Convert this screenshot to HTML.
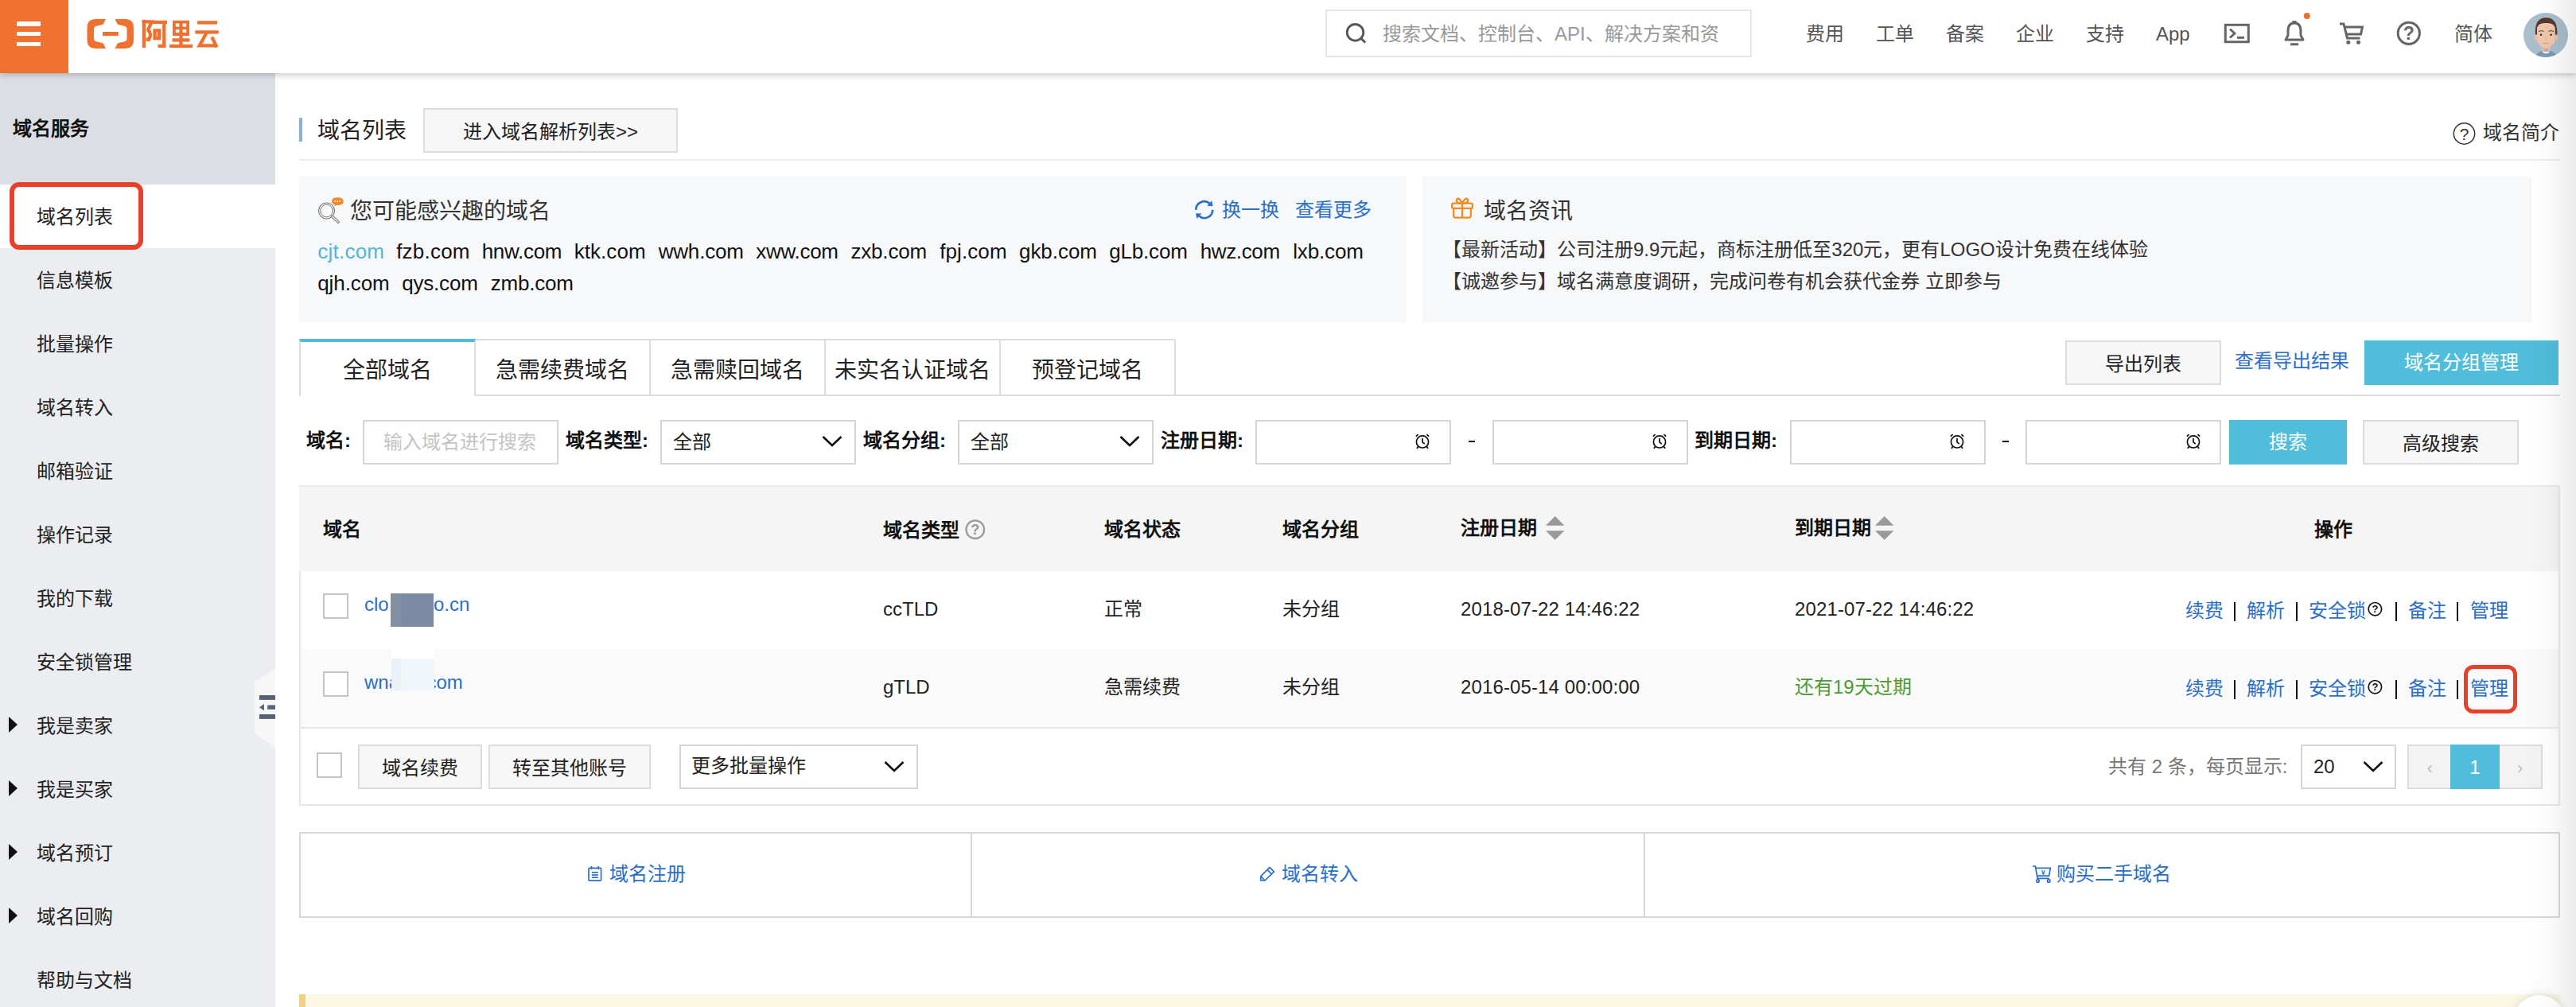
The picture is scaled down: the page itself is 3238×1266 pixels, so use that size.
<!DOCTYPE html>
<html lang="zh-CN">
<head>
<meta charset="utf-8">
<title>域名列表</title>
<style>
*{box-sizing:border-box;margin:0;padding:0}
html,body{width:3238px;height:1266px;overflow:hidden;background:#fff}
body{position:relative;font-family:"Liberation Sans",sans-serif;font-size:24px;color:#222;}
.a{position:absolute}
.t{position:absolute;white-space:nowrap;line-height:40px;height:40px}
.b{font-weight:bold}
.lk{color:#2a6fc9}
svg{position:absolute;overflow:visible}
/* header */
#hd{position:absolute;left:0;top:0;width:3238px;height:92px;background:#fff;box-shadow:0 1px 9px rgba(0,0,0,.28);z-index:10}
#ham{position:absolute;left:0;top:0;width:86px;height:92px;background:#f0702f}
#ham i{position:absolute;left:21px;width:30px;height:5.4px;background:#fff}
.nav{color:#555}
/* sidebar */
#sb{position:absolute;left:0;top:92px;width:346px;height:1174px;background:#ebedf1}
#sbh{position:absolute;left:0;top:0;width:346px;height:140px;background:#dbdee3}
.si{position:absolute;left:45.5px;height:40px;line-height:40px;white-space:nowrap;color:#222}
.tri{position:absolute;left:11px;width:0;height:0;border-left:11px solid #111;border-top:10.5px solid transparent;border-bottom:10.5px solid transparent}
/* generic boxes */
.inp{position:absolute;top:528px;height:56px;border:2px solid #d4d5d8;background:#fff}
.btn{position:absolute;border:2px solid #dcdcdc;background:#f7f7f7;text-align:center;color:#222;white-space:nowrap}
.teal{position:absolute;background:#50bdda;color:#fff;text-align:center;white-space:nowrap}
.cb{position:absolute;width:32px;height:32px;border:2px solid #c4c4c4;background:#fff}
.tb{text-align:center;font-size:28px;color:#222}
#doms span{position:absolute;white-space:nowrap}
.th{color:#111}
.sep{position:absolute;width:2px;height:24px;background:#111}
</style>
</head>
<body>
<div id="hd">
  <div id="ham"><i style="top:27.2px"></i><i style="top:40.1px"></i><i style="top:52.9px"></i></div>
  <!-- logo -->
  <svg style="left:0;top:0" width="300" height="92" viewBox="0 0 300 92">
    <g fill="#f0702f">
      <path d="M133 24 L120.5 24 Q109.5 24 109.5 35 L109.5 50 Q109.5 61 120.5 61 L133 61 L129.6 54.2 L121 52.2 Q118 51.4 118 48.4 L118 36.6 Q118 33.6 121 32.8 L129.6 30.8 Z"/>
      <path d="M144.5 24 L157 24 Q168 24 168 35 L168 50 Q168 61 157 61 L144.5 61 L147.9 54.2 L156.500 52.2 Q159.5 51.4 159.5 48.4 L159.5 36.6 Q159.5 33.600 156.500 32.8 L147.9 30.8 Z"/>
      <rect x="129" y="40" width="19.800" height="5"/>
    </g>
    <g fill="none" stroke="#f0702f" stroke-width="4.300" stroke-linejoin="miter" stroke-linecap="butt">
      <!-- 阿 -->
      <path d="M180.900 24.800 V60.200"/>
      <path d="M178.600 27.300 H190.600 L186.200 37.500 Q191.400 43 186.800 50 L183.500 49.400"/>
      <path d="M191.800 27.900 H210"/>
      <path d="M206.300 27.900 V57.800 H198.500"/>
      <path d="M194.600 38.400 H200.200 V48 H194.600 Z"/>
      <!-- 里 -->
      <path d="M218.900 27.700 H236.100 V43 H218.900 Z" stroke-width="3.800"/>
      <path d="M218.900 35.300 H236.100" stroke-width="3.400"/>
      <path d="M227.500 28 V58"/>
      <path d="M216.600 50.400 H238.400"/>
      <path d="M213 57.900 H242"/>
      <!-- 云 -->
      <path d="M248.100 28.400 H273"/>
      <path d="M245.300 40.400 H274.800"/>
      <path d="M259.500 41.500 L250.800 57.300 H271.800"/>
      <path d="M266.300 46.500 L272.600 59.500"/>
    </g>
  </svg>
  <!-- search -->
  <div class="a" style="left:1666px;top:12px;width:536px;height:60px;border:2px solid #e6e6e6;background:#fff"></div>
  <svg style="left:1690px;top:28px" width="30" height="30" viewBox="0 0 30 30"><circle cx="13.500" cy="12.800" r="10.300" fill="none" stroke="#555" stroke-width="2.800"/><path d="M20.800 20.400 L26.300 25.500" stroke="#555" stroke-width="2.800" fill="none"/></svg>
  <div class="t" style="left:1738px;top:22.5px;color:#999">搜索文档、控制台、API、解决方案和资</div>
  <!-- nav -->
  <div class="t nav" style="left:2270px;top:22.5px">费用</div>
  <div class="t nav" style="left:2358px;top:22.5px">工单</div>
  <div class="t nav" style="left:2446px;top:22.5px">备案</div>
  <div class="t nav" style="left:2534px;top:22.5px">企业</div>
  <div class="t nav" style="left:2622px;top:22.5px">支持</div>
  <div class="t nav" style="left:2710px;top:22.5px">App</div>
  <!-- terminal -->
  <svg style="left:2796px;top:30px" width="32" height="24" viewBox="0 0 32 24"><rect x="1.300" y="1.300" width="29" height="21.400" fill="none" stroke="#666" stroke-width="3"/><path d="M7 6.500 L13 12 L7 17.500" fill="none" stroke="#666" stroke-width="3"/><path d="M16 17.300 H25" stroke="#666" stroke-width="3"/></svg>
  <!-- bell -->
  <svg style="left:2870px;top:14px" width="36" height="46" viewBox="0 0 36 46"><path d="M11.300 13.500 H16.700" stroke="#666" stroke-width="2.800"/><path d="M3 36 L6 30.500 V25 Q6 15 14 15 Q22 15 22 25 V30.500 L25 36 Z" fill="none" stroke="#666" stroke-width="3" stroke-linejoin="round"/><path d="M9 41.700 H19" stroke="#666" stroke-width="3"/><circle cx="29.800" cy="5.900" r="4" fill="#f0702f"/></svg>
  <!-- cart -->
  <svg style="left:2940px;top:28px" width="34" height="30" viewBox="0 0 34 30"><path d="M1 2 H6 L10.500 20 H26.500" fill="none" stroke="#666" stroke-width="3"/><path d="M7 6 H29.500 L27.500 15 H9.500" fill="none" stroke="#666" stroke-width="3"/><circle cx="11.800" cy="25.300" r="2.500" fill="#666"/><circle cx="24.500" cy="25.300" r="2.500" fill="#666"/></svg>
  <!-- help -->
  <svg style="left:3012px;top:26px" width="32" height="32" viewBox="0 0 32 32"><circle cx="15.800" cy="15.800" r="13.600" fill="none" stroke="#666" stroke-width="3"/><text x="15.800" y="24" text-anchor="middle" font-family="Liberation Sans, sans-serif" font-weight="bold" font-size="23" fill="#666">?</text></svg>
  <div class="t nav" style="left:3085px;top:22.5px">简体</div>
  <!-- avatar -->
  <svg style="left:3172px;top:16px" width="56" height="56" viewBox="0 0 56 56">
    <defs><clipPath id="avc"><circle cx="28" cy="28" r="28"/></clipPath></defs>
    <g clip-path="url(#avc)">
      <rect width="56" height="56" fill="#a9bfcc"/>
      <path d="M15 56 Q17 48.500 24 48 H33 Q40 48.500 42 56 Z" fill="#7a9bb5"/>
      <path d="M24.300 44 H32.300 V50 Q28.300 52.500 24.300 50 Z" fill="#fff"/>
      <path d="M24.800 40 H31.800 V48.500 Q28.300 50.500 24.800 48.500 Z" fill="#dba58e"/>
      <ellipse cx="15.600" cy="31" rx="2.200" ry="3.500" fill="#e9bfa5"/><ellipse cx="41.200" cy="31" rx="2.200" ry="3.500" fill="#e9bfa5"/>
      <path d="M15 27.500 Q13.500 6.200 28.400 6.200 Q43.300 6.200 42.300 27.500 Z" fill="#5a3630"/>
      <path d="M17 21 Q17 12.500 28.400 13 Q39.800 12.500 39.800 21 V32 Q39.800 42 28.400 45.500 Q17 42 17 32 Z" fill="#f0c8ac"/>
      <circle cx="22" cy="27.800" r="1.300" fill="#3a2a26"/><circle cx="34.600" cy="27.800" r="1.300" fill="#3a2a26"/>
      <path d="M19 23.500 Q22 21.800 25.500 23.300" stroke="#5a3630" stroke-width="1" fill="none"/><path d="M31.500 23.300 Q35 21.800 38 23.500" stroke="#5a3630" stroke-width="1" fill="none"/>
      <path d="M24.500 38.600 H32" stroke="#dba58e" stroke-width="1.400"/>
      <path d="M28.500 29 L27.800 34 H29.300" stroke="#e2b398" stroke-width="0.900" fill="none"/>
    </g>
  </svg>
</div>

<div id="sb">
<div id="sbh"></div>
<div class="t b" style="left:16px;top:50px;color:#111">域名服务</div>
<div class="a" style="left:0;top:140px;width:346px;height:80px;background:#fff"></div>
<div class="si" style="top:160.5px">域名列表</div>
<div class="si" style="top:240.5px">信息模板</div>
<div class="si" style="top:320.5px">批量操作</div>
<div class="si" style="top:400.5px">域名转入</div>
<div class="si" style="top:480.5px">邮箱验证</div>
<div class="si" style="top:560.5px">操作记录</div>
<div class="si" style="top:640.5px">我的下载</div>
<div class="si" style="top:720.5px">安全锁管理</div>
<div class="si" style="top:800.5px">我是卖家</div>
<div class="tri" style="top:808.5px"></div>
<div class="si" style="top:880.5px">我是买家</div>
<div class="tri" style="top:888.5px"></div>
<div class="si" style="top:960.5px">域名预订</div>
<div class="tri" style="top:968.5px"></div>
<div class="si" style="top:1040.5px">域名回购</div>
<div class="tri" style="top:1048.5px"></div>
<div class="si" style="top:1120.5px">帮助与文档</div>
<div class="a" style="left:12px;top:136.700px;width:168px;height:85px;border:6px solid #e9402a;border-radius:12px"></div>
<svg style="left:320px;top:748px" width="26" height="100" viewBox="0 0 26 100"><path d="M26 0 L0 17.500 V82 L26 99.500 Z" fill="#f7f7f8"/><g fill="#566378"><rect x="6" y="34" width="20" height="5.900"/><rect x="16.200" y="46.500" width="9.800" height="5.400"/><path d="M6 49.200 L11.900 45 V53.400 Z"/><rect x="6" y="58" width="20" height="5.900"/></g></svg>
</div>
<!-- title bar -->
<div class="a" style="left:376px;top:148px;width:4px;height:30px;background:#86b3dc"></div>
<div class="t" style="left:399px;top:145px;font-size:28px;color:#222">域名列表</div>
<div class="btn" style="left:532px;top:136px;width:320px;height:56px;line-height:55px">进入域名解析列表&gt;&gt;</div>
<svg style="left:3083px;top:154px" width="30" height="30" viewBox="0 0 30 30"><circle cx="14.500" cy="14" r="13.200" fill="none" stroke="#333" stroke-width="1.500"/><text x="14.500" y="21.500" text-anchor="middle" font-family="Liberation Sans, sans-serif" font-size="21" fill="#333">?</text></svg>
<div class="t" style="left:3121px;top:147px;color:#333">域名简介</div>
<div class="a" style="left:376px;top:200px;width:2842px;height:2px;background:#ececec"></div>
<!-- panel left -->
<div class="a" style="left:376px;top:222px;width:1392px;height:184px;background:#f7f8fa"></div>
<svg style="left:399px;top:247px" width="34" height="34" viewBox="0 0 34 34">
  <circle cx="11.500" cy="18" r="10" fill="none" stroke="#777" stroke-width="1.100"/><circle cx="11.500" cy="18" r="7.800" fill="none" stroke="#777" stroke-width="1"/>
  <path d="M18.500 25 L26.300 32.200" stroke="#777" stroke-width="3.200" stroke-linecap="round"/><path d="M18.500 25 L26.300 32.200" stroke="#f7f8fa" stroke-width="1.200" stroke-linecap="round"/>
  <path d="M18 6.200 Q18 1.200 25.300 1.200 Q32.700 1.200 32.700 6.200 Q32.700 11 25.300 11 L23.500 11 L21.500 12.600 L21.800 10.600 Q18 9.500 18 6.200 Z" fill="#f08a2b"/>
  <circle cx="22.300" cy="6.100" r="0.900" fill="#fff"/><circle cx="25.300" cy="6.100" r="0.900" fill="#fff"/><circle cx="28.300" cy="6.100" r="0.900" fill="#fff"/>
</svg>
<div class="t" style="left:440px;top:246px;font-size:28px;color:#333">您可能感兴趣的域名</div>
<svg style="left:1500px;top:250px" width="28" height="28" viewBox="0 0 28 28"><g fill="none" stroke="#2a6fc9" stroke-width="2.600"><path d="M3.300 13.700 A10.400 10.400 0 0 1 20.500 5.800"/><path d="M24.300 13.700 A10.400 10.400 0 0 1 7.100 21.600"/></g><path d="M17.200 8.800 L24.600 9.200 L23.200 2.300 Z" fill="#2a6fc9"/><path d="M10.400 18.600 L3 18.200 L4.400 25.100 Z" fill="#2a6fc9"/></svg>
<div class="t lk" style="left:1536px;top:244px">换一换</div>
<div class="t lk" style="left:1628px;top:244px">查看更多</div>
<div class="a" id="doms" style="left:400px;top:296px;width:1340px;font-size:26px;line-height:40px;color:#111;word-spacing:0"><span style="left:-0.8px;top:0px;letter-spacing:0.24px;color:#4fb8d8">cjt.com</span><span style="left:98.2px;top:0px;letter-spacing:0.21px">fzb.com</span><span style="left:205.7px;top:0px;letter-spacing:-0.30px">hnw.com</span><span style="left:321.7px;top:0px;letter-spacing:0.06px">ktk.com</span><span style="left:427.7px;top:0px;letter-spacing:-0.19px">wwh.com</span><span style="left:550.2px;top:0px;letter-spacing:-0.28px">xww.com</span><span style="left:669.4px;top:0px;letter-spacing:-0.16px">zxb.com</span><span style="left:781.2px;top:0px;letter-spacing:0.10px">fpj.com</span><span style="left:881.0px;top:0px;letter-spacing:-0.05px">gkb.com</span><span style="left:994.2px;top:0px;letter-spacing:-0.18px">gLb.com</span><span style="left:1108.7px;top:0px;letter-spacing:-0.37px">hwz.com</span><span style="left:1225.2px;top:0px;letter-spacing:-0.15px">lxb.com</span><span style="left:-0.8px;top:40px;letter-spacing:-0.08px">qjh.com</span><span style="left:105.2px;top:40px;letter-spacing:-0.19px">qys.com</span><span style="left:216.7px;top:40px;letter-spacing:-0.21px">zmb.com</span></div>
<!-- panel right -->
<div class="a" style="left:1788px;top:222px;width:1394px;height:184px;background:#f7f8fa"></div>
<svg style="left:1823px;top:246px" width="30" height="30" viewBox="0 0 30 30"><g fill="none" stroke="#f08a24" stroke-width="2.200" stroke-linejoin="round"><rect x="2.100" y="9.600" width="25.800" height="6.300" rx="1.500"/><path d="M4.200 15.900 V25.200 Q4.200 27.600 6.600 27.600 H23.400 Q25.800 27.600 25.800 25.200 V15.900"/><path d="M15 9.600 V27.600"/><path d="M15 9.600 Q6.500 9.600 8 4.800 Q10.500 0.800 15 9.600 Q19.500 0.800 22 4.800 Q23.500 9.600 15 9.600"/></g></svg>
<div class="t" style="left:1864.5px;top:246px;font-size:28px;color:#333">域名资讯</div>
<div class="t" style="left:1813px;top:294px;color:#333">【最新活动】公司注册9.9元起，商标注册低至320元，更有LOGO设计免费在线体验</div>
<div class="t" style="left:1813px;top:334px;color:#333">【诚邀参与】域名满意度调研，完成问卷有机会获代金券 立即参与</div>
<!-- tabs -->
<div class="a" style="left:376px;top:496px;width:2842px;height:2px;background:#ddd"></div>
<div class="a" style="left:596.500px;top:426px;width:881.500px;height:72px;border:2px solid #ddd;border-left:none"></div>
<div class="a" style="left:816px;top:428px;width:2px;height:68px;background:#ddd"></div>
<div class="a" style="left:1036px;top:428px;width:2px;height:68px;background:#ddd"></div>
<div class="a" style="left:1255.500px;top:428px;width:2px;height:68px;background:#ddd"></div>
<div class="a" style="left:376px;top:426px;width:222px;height:72px;background:#fff;border:2px solid #ddd;border-bottom:none;border-top:4px solid #4fbcd8"></div>
<div class="t tb" style="left:376px;width:222px;top:446px">全部域名</div>
<div class="t tb" style="left:597px;width:220px;top:446px">急需续费域名</div>
<div class="t tb" style="left:817px;width:220px;top:446px">急需赎回域名</div>
<div class="t tb" style="left:1037px;width:220px;top:446px">未实名认证域名</div>
<div class="t tb" style="left:1257px;width:220px;top:446px">预登记域名</div>
<div class="btn" style="left:2596px;top:428px;width:196px;height:56px;line-height:55px">导出列表</div>
<div class="t lk" style="left:2809px;top:434px">查看导出结果</div>
<div class="teal" style="left:2972px;top:428px;width:244px;height:56px;line-height:56px">域名分组管理</div>

<!-- filter row -->
<div class="t b" style="left:385px;top:534px;color:#111">域名:</div>
<div class="inp" style="left:456px;width:246px"></div>
<div class="t" style="left:482px;top:536px;color:#c4c4c4">输入域名进行搜索</div>
<div class="t b" style="left:711px;top:534px;color:#111">域名类型:</div>
<div class="inp" style="left:830px;width:246px"></div>
<div class="t" style="left:846px;top:536px">全部</div>
<svg class="chev" style="left:1033px;top:547px" width="26" height="16" viewBox="0 0 26 16"><path d="M1.500 2 L13 13 L24.500 2" fill="none" stroke="#111" stroke-width="2.600"/></svg>
<div class="t b" style="left:1085px;top:534px;color:#111">域名分组:</div>
<div class="inp" style="left:1204px;width:246px"></div>
<div class="t" style="left:1220px;top:536px">全部</div>
<svg class="chev" style="left:1407px;top:547px" width="26" height="16" viewBox="0 0 26 16"><path d="M1.500 2 L13 13 L24.500 2" fill="none" stroke="#111" stroke-width="2.600"/></svg>
<div class="t b" style="left:1459px;top:534px;color:#111">注册日期:</div>
<div class="inp" style="left:1578px;width:246px"></div>
<div class="inp" style="left:1876px;width:246px"></div>
<div class="a" style="left:1845.500px;top:553.800px;width:8.500px;height:2.600px;background:#111"></div>
<div class="t b" style="left:2130px;top:534px;color:#111">到期日期:</div>
<div class="inp" style="left:2250px;width:246px"></div>
<div class="inp" style="left:2546px;width:246px"></div>
<div class="a" style="left:2516.500px;top:553.800px;width:8.500px;height:2.600px;background:#111"></div>
<svg width="0" height="0"><defs><g id="clk" fill="none" stroke="#111" stroke-width="1.700"><circle cx="10" cy="10.400" r="7.600"/><path d="M10 6 V10.800 L12.800 13.200"/><path d="M1.800 3.600 L4.600 1.200"/><path d="M18.200 3.600 L15.400 1.200"/><path d="M4.600 16.600 L2.800 18.800"/><path d="M15.400 16.600 L17.200 18.800"/></g></defs></svg>
<svg style="left:1778px;top:545px" width="20" height="20"><use href="#clk"/></svg>
<svg style="left:2076px;top:545px" width="20" height="20"><use href="#clk"/></svg>
<svg style="left:2450px;top:545px" width="20" height="20"><use href="#clk"/></svg>
<svg style="left:2747px;top:545px" width="20" height="20"><use href="#clk"/></svg>
<div class="teal" style="left:2802px;top:528px;width:148px;height:56px;line-height:56px">搜索</div>
<div class="btn" style="left:2970px;top:528px;width:196px;height:56px;line-height:55px">高级搜索</div>
<!-- table -->
<div class="a" style="left:376px;top:610px;width:2842px;height:108px;background:#f5f5f5;border-top:2px solid #ebebeb"></div>
<div class="a" style="left:376px;top:816px;width:2842px;height:98px;background:#fafafa"></div>
<div class="a" style="left:376px;top:914px;width:2842px;height:2px;background:#e8e8e8"></div>
<div class="a" style="left:376px;top:1011px;width:2842px;height:2px;background:#e8e8e8"></div>
<div class="a" style="left:376px;top:718px;width:2px;height:295px;background:#e8e8e8"></div>
<div class="a" style="left:3216px;top:610px;width:2px;height:403px;background:#e8e8e8"></div>
<div class="t b th" style="left:406px;top:646px">域名</div>
<div class="t b th" style="left:1110px;top:647px">域名类型</div>
<svg style="left:1212px;top:652px" width="28" height="28" viewBox="0 0 28 28"><circle cx="13.800" cy="13.700" r="11.300" fill="none" stroke="#999" stroke-width="2.300"/><text x="13.800" y="20.300" text-anchor="middle" font-family="Liberation Sans, sans-serif" font-weight="bold" font-size="18" fill="#999">?</text></svg>
<div class="t b th" style="left:1388px;top:646px">域名状态</div>
<div class="t b th" style="left:1612px;top:646px">域名分组</div>
<div class="t b th" style="left:1836px;top:644px">注册日期</div>
<svg style="left:1943px;top:649px" width="24" height="30" viewBox="0 0 24 30"><path d="M11.700 0 L23.400 11.700 H0 Z M0 18.200 H23.400 L11.700 29.700 Z" fill="#999"/></svg>
<div class="t b th" style="left:2256px;top:644px">到期日期</div>
<svg style="left:2356.500px;top:649px" width="24" height="30" viewBox="0 0 24 30"><path d="M11.700 0 L23.400 11.700 H0 Z M0 18.200 H23.400 L11.700 29.700 Z" fill="#999"/></svg>
<div class="t b th" style="left:2909px;top:646px">操作</div>
<!-- row 1 -->
<div class="cb" style="left:406px;top:746px"></div>
<div class="t lk" style="left:458px;top:740px">clo</div><div class="t lk" style="left:545px;top:740px">o.cn</div>
<div class="a" style="left:491px;top:746px;width:54px;height:42px;background:#7a8aa2"></div>
<div class="a" style="left:491px;top:746px;width:13px;height:42px;background:#82909f"></div>
<div class="t" style="left:1110px;top:746px">ccTLD</div>
<div class="t" style="left:1388px;top:746px">正常</div>
<div class="t" style="left:1612px;top:746px">未分组</div>
<div class="t" style="left:1836px;top:746px;letter-spacing:.13px">2018-07-22 14:46:22</div>
<div class="t" style="left:2256px;top:746px;letter-spacing:.13px">2021-07-22 14:46:22</div>
<!-- row 2 -->
<div class="cb" style="left:406px;top:844px"></div>
<div class="t lk" style="left:458px;top:838px">wna</div><div class="t lk" style="left:536.5px;top:838px">com</div>
<div class="a" style="left:492px;top:816px;width:54px;height:13px;background:#fff"></div>
<div class="a" style="left:492px;top:828px;width:54px;height:40px;background:#f1f6fb"></div>
<div class="a" style="left:492px;top:828px;width:12px;height:40px;background:#eaf1fa"></div>
<div class="t" style="left:1110px;top:844px">gTLD</div>
<div class="t" style="left:1388px;top:844px">急需续费</div>
<div class="t" style="left:1612px;top:844px">未分组</div>
<div class="t" style="left:1836px;top:844px;letter-spacing:.13px">2016-05-14 00:00:00</div>
<div class="t" style="left:2256px;top:844px;color:#4a9a35">还有19天过期</div>
<div class="t lk" style="left:2747px;top:748px">续费</div>
<div class="sep" style="left:2808.300px;top:757px"></div>
<div class="t lk" style="left:2824px;top:748px">解析</div>
<div class="sep" style="left:2885.800px;top:757px"></div>
<div class="t lk" style="left:2901.500px;top:748px">安全锁</div>
<svg style="left:2975px;top:755px" width="22" height="22" viewBox="0 0 22 22"><circle cx="10.400" cy="10.700" r="8.200" fill="none" stroke="#111" stroke-width="1.700"/><text x="10.400" y="15.300" text-anchor="middle" font-family="Liberation Sans, sans-serif" font-weight="bold" font-size="13" fill="#111">?</text></svg>
<div class="sep" style="left:3010.600px;top:757px"></div>
<div class="t lk" style="left:3027px;top:748px">备注</div>
<div class="sep" style="left:3088.300px;top:757px"></div>
<div class="t lk" style="left:3104.500px;top:748px">管理</div>
<div class="t lk" style="left:2747px;top:846px">续费</div>
<div class="sep" style="left:2808.300px;top:855px"></div>
<div class="t lk" style="left:2824px;top:846px">解析</div>
<div class="sep" style="left:2885.800px;top:855px"></div>
<div class="t lk" style="left:2901.500px;top:846px">安全锁</div>
<svg style="left:2975px;top:853px" width="22" height="22" viewBox="0 0 22 22"><circle cx="10.400" cy="10.700" r="8.200" fill="none" stroke="#111" stroke-width="1.700"/><text x="10.400" y="15.300" text-anchor="middle" font-family="Liberation Sans, sans-serif" font-weight="bold" font-size="13" fill="#111">?</text></svg>
<div class="sep" style="left:3010.600px;top:855px"></div>
<div class="t lk" style="left:3027px;top:846px">备注</div>
<div class="sep" style="left:3088.300px;top:855px"></div>
<div class="t lk" style="left:3104.500px;top:846px">管理</div>
<div class="a" style="left:3097px;top:836.300px;width:66.500px;height:60.600px;border:5.800px solid #e9402a;border-radius:12px"></div>
<!-- bottom bar -->
<div class="cb" style="left:398px;top:946px"></div>
<div class="btn" style="left:450px;top:936px;width:156px;height:56px;line-height:55px">域名续费</div>
<div class="btn" style="left:614px;top:936px;width:204px;height:56px;line-height:55px">转至其他账号</div>
<div class="a" style="left:854px;top:936px;width:300px;height:56px;border:2px solid #d4d5d8;background:#fff"></div>
<div class="t" style="left:869px;top:943px">更多批量操作</div>
<svg style="left:1111px;top:955.5px" width="26" height="16" viewBox="0 0 26 16"><path d="M1.500 2 L13 13 L24.500 2" fill="none" stroke="#111" stroke-width="2.600"/></svg>
<div class="t" style="left:2650px;top:944px;color:#777">共有 2 条，每页显示:</div>
<div class="a" style="left:2892px;top:936px;width:120px;height:56px;border:2px solid #d4d5d8;background:#fff"></div>
<div class="t" style="left:2908px;top:944px">20</div>
<svg style="left:2970px;top:955.5px" width="26" height="16" viewBox="0 0 26 16"><path d="M1.500 2 L13 13 L24.500 2" fill="none" stroke="#111" stroke-width="2.600"/></svg>
<div class="a" style="left:3026px;top:936px;width:170px;height:56px;border:2px solid #dcdcdc;background:#f3f3f3"></div>
<div class="teal" style="left:3080px;top:936px;width:62px;height:56px;line-height:58px">1</div>
<div class="t" style="left:3050.5px;top:946px;color:#bbb;font-size:22px">‹</div>
<div class="t" style="left:3164px;top:946px;color:#bbb;font-size:22px">›</div>
<!-- quick links -->
<div class="a" style="left:376px;top:1046px;width:2842px;height:108px;border:2px solid #d8d8d8;background:#fff"></div>
<div class="a" style="left:1220px;top:1048px;width:2px;height:104px;background:#d8d8d8"></div>
<div class="a" style="left:2066px;top:1048px;width:2px;height:104px;background:#d8d8d8"></div>
<svg style="left:738px;top:1088px" width="20" height="22" viewBox="0 0 20 22"><g fill="none" stroke="#2a6fc9" stroke-width="1.700"><rect x="2" y="3.400" width="15.600" height="15.800" rx="1.200"/><path d="M5.500 1 V5"/><path d="M14.100 1 V5"/><path d="M5.800 8.800 H13.800"/><path d="M5.800 12 H13.800"/><path d="M5.800 15.200 H13.800"/></g></svg>
<div class="t lk" style="left:766px;top:1079px">域名注册</div>
<svg style="left:1582px;top:1088px" width="22" height="22" viewBox="0 0 22 22"><g fill="none" stroke="#2a6fc9" stroke-width="1.700" stroke-linejoin="round"><path d="M14 2.400 L19.400 7.800 L8 19 H2.800 V13.600 Z"/><path d="M11 5.400 L16.400 10.800"/><path d="M2.800 13.600 L8 19"/></g></svg>
<div class="t lk" style="left:1611px;top:1079px">域名转入</div>
<svg style="left:2554px;top:1087px" width="26" height="24" viewBox="0 0 26 24"><g fill="none" stroke="#2a6fc9" stroke-width="1.700"><path d="M1 2 H4.400 L7.200 17.400 H21.800"/><path d="M5 4.400 H23.400 L21.600 14.200 H6.800"/><circle cx="7.600" cy="20.400" r="1.700"/><circle cx="21.200" cy="20.400" r="1.700"/></g><text x="14.200" y="12.500" text-anchor="middle" font-family="Liberation Sans, sans-serif" font-size="9" font-weight="bold" fill="#2a6fc9">¥</text></svg>
<div class="t lk" style="left:2585px;top:1079px">购买二手域名</div>
<!-- yellow bar -->
<div class="a" style="left:376px;top:1250px;width:2842px;height:20px;background:#fbf8e4;border-left:8px solid #ecd084"></div>
<!-- floating -->
<div class="a" style="left:3160px;top:1251px;width:64px;height:64px;border-radius:50%;background:#fff;box-shadow:0 0 14px rgba(0,0,0,.13)"></div>
<!-- right gradient -->
<div class="a" style="left:3176px;top:0;width:62px;height:1266px;background:linear-gradient(to right,rgba(0,0,0,0),rgba(0,0,0,.02) 45%,rgba(0,0,0,.075));z-index:20;pointer-events:none"></div>

</body>
</html>
